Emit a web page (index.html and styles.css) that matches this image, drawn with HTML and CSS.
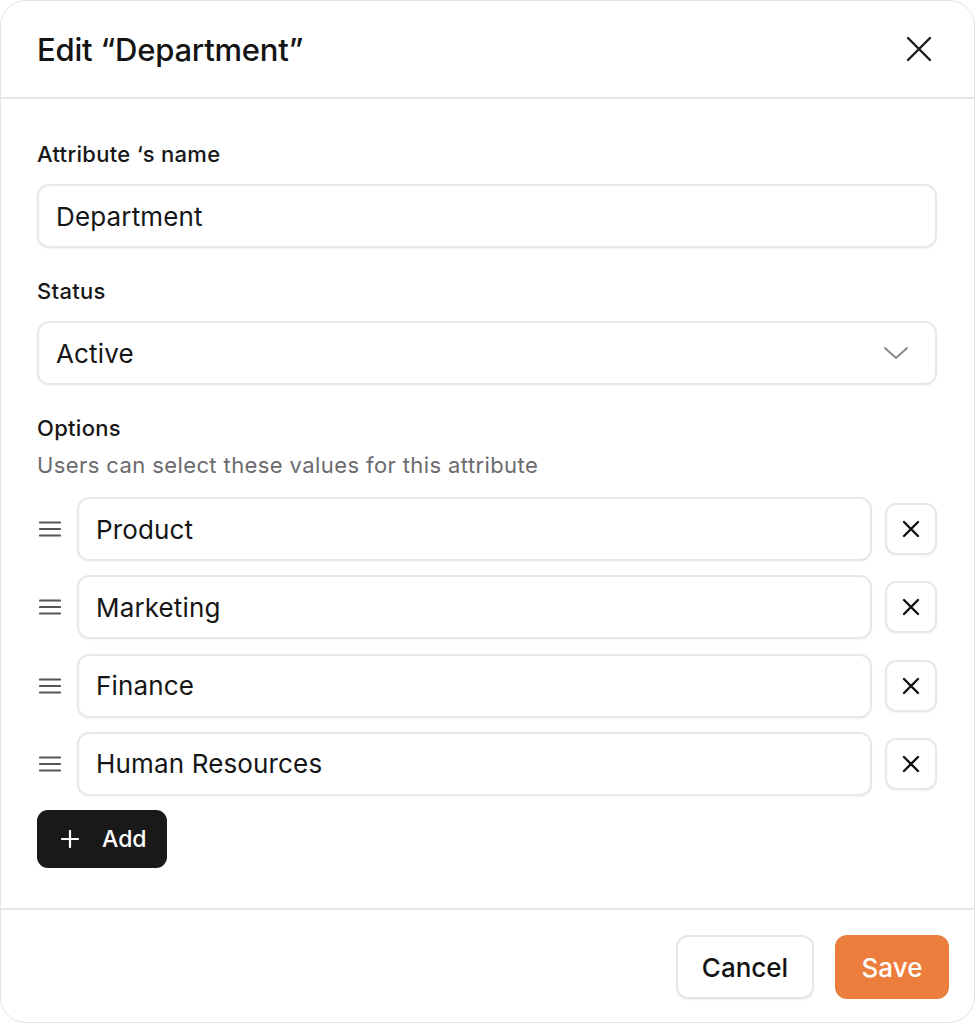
FILE: index.html
```html
<!DOCTYPE html>
<html lang="en">
<head>
<meta charset="utf-8">
<title>Edit Department</title>
<link rel="stylesheet" href="styles.css">
</head>
<body>
<div class="dialog">
  <header class="dialog-header">
    <h1 class="dialog-title">Edit “Department”</h1>
    <button class="icon-btn close-btn" aria-label="Close">
      <svg width="26" height="26" viewBox="0 0 26 26"><path d="M2 2L24 24M24 2L2 24" stroke="#1a1a1a" stroke-width="2.4" stroke-linecap="round" fill="none"/></svg>
    </button>
  </header>
  <main class="dialog-body">
    <label class="field-label">Attribute ‘s name</label>
    <div class="input">Department</div>

    <label class="field-label mt">Status</label>
    <div class="input select">
      <span>Active</span>
      <svg width="26" height="14" viewBox="0 0 26 14"><path d="M2 2L13 12L24 2" stroke="#8a8a8a" stroke-width="2" stroke-linecap="round" stroke-linejoin="round" fill="none"/></svg>
    </div>

    <label class="field-label mt">Options</label>
    <p class="helper">Users can select these values for this attribute</p>

    <div class="options">
      <div class="option-row">
        <span class="handle"><svg width="22" height="16" viewBox="0 0 22 16"><path d="M1 1.5H21M1 8H21M1 14.5H21" stroke="#555" stroke-width="2.2" stroke-linecap="round"/></svg></span>
        <div class="input option-input">Product</div>
        <button class="remove-btn" aria-label="Remove"><svg width="18" height="18" viewBox="0 0 18 18"><path d="M2 2L16 16M16 2L2 16" stroke="#111" stroke-width="2.4" stroke-linecap="round"/></svg></button>
      </div>
      <div class="option-row">
        <span class="handle"><svg width="22" height="16" viewBox="0 0 22 16"><path d="M1 1.5H21M1 8H21M1 14.5H21" stroke="#555" stroke-width="2.2" stroke-linecap="round"/></svg></span>
        <div class="input option-input">Marketing</div>
        <button class="remove-btn" aria-label="Remove"><svg width="18" height="18" viewBox="0 0 18 18"><path d="M2 2L16 16M16 2L2 16" stroke="#111" stroke-width="2.4" stroke-linecap="round"/></svg></button>
      </div>
      <div class="option-row">
        <span class="handle"><svg width="22" height="16" viewBox="0 0 22 16"><path d="M1 1.5H21M1 8H21M1 14.5H21" stroke="#555" stroke-width="2.2" stroke-linecap="round"/></svg></span>
        <div class="input option-input">Finance</div>
        <button class="remove-btn" aria-label="Remove"><svg width="18" height="18" viewBox="0 0 18 18"><path d="M2 2L16 16M16 2L2 16" stroke="#111" stroke-width="2.4" stroke-linecap="round"/></svg></button>
      </div>
      <div class="option-row">
        <span class="handle"><svg width="22" height="16" viewBox="0 0 22 16"><path d="M1 1.5H21M1 8H21M1 14.5H21" stroke="#555" stroke-width="2.2" stroke-linecap="round"/></svg></span>
        <div class="input option-input">Human Resources</div>
        <button class="remove-btn" aria-label="Remove"><svg width="18" height="18" viewBox="0 0 18 18"><path d="M2 2L16 16M16 2L2 16" stroke="#111" stroke-width="2.4" stroke-linecap="round"/></svg></button>
      </div>
    </div>

    <button class="add-btn">
      <svg width="18" height="18" viewBox="0 0 18 18"><path d="M9 1V17M1 9H17" stroke="#fff" stroke-width="2.2" stroke-linecap="round"/></svg>
      <span>Add</span>
    </button>
  </main>
  <footer class="dialog-footer">
    <button class="btn btn-secondary">Cancel</button>
    <button class="btn btn-primary">Save</button>
  </footer>
</div>
</body>
</html>
```

FILE: styles.css
```css
* { box-sizing: border-box; }
html, body { margin: 0; padding: 0; background: #ffffff; }
body {
  font-family: Inter, "Noto Sans", "Liberation Sans", sans-serif;
  color: #161616;
}
.dialog {
  width: 975px;
  height: 1023px;
  border: 1px solid #e3e3e3;
  border-radius: 26px;
  background: #fff;
  display: flex;
  flex-direction: column;
  overflow: hidden;
}
.dialog-header {
  height: 98px;
  flex: none;
  border-bottom: 2px solid #e6e6e6;
  display: flex;
  align-items: center;
  justify-content: space-between;
  padding: 0 42px 0 36px;
}
.dialog-title {
  margin: 0;
  font-size: 31px;
  font-weight: 500;
  letter-spacing: -0.2px;
  color: #141414;
}
.icon-btn {
  border: 0;
  background: none;
  padding: 0;
  display: flex;
  cursor: pointer;
}
.dialog-body {
  flex: 1;
  padding: 41px 37px 0 36px;
  display: flex;
  flex-direction: column;
  align-items: flex-start;
}
.field-label {
  display: block;
  font-size: 22px;
  line-height: 28px;
  font-weight: 500;
  letter-spacing: 0.3px;
  color: #171717;
  margin-bottom: 16px;
}
.field-label.mt { margin-top: 29px; }
.input {
  width: 100%;
  height: 64px;
  border: 2px solid #e8e8e8;
  border-radius: 12px;
  background: #fff;
  box-shadow: 0 1px 2px rgba(0,0,0,0.05);
  display: flex;
  align-items: center;
  padding: 0 17px;
  font-size: 26px;
  letter-spacing: 0.15px;
  color: #161616;
}
.select { justify-content: space-between; padding-right: 26px; }
.helper {
  margin: -7px 0 18px;
  font-size: 22px;
  line-height: 28px;
  letter-spacing: 0.4px;
  color: #6b6b6e;
}
.options {
  width: 100%;
  display: flex;
  flex-direction: column;
  gap: 14.3px;
}
.option-row {
  display: flex;
  align-items: center;
}
.handle {
  width: 40px;
  display: flex;
  align-items: center;
  padding-left: 2px;
}
.option-input { flex: 1; width: auto; }
.remove-btn {
  width: 52px;
  height: 52px;
  margin-left: 13px;
  border: 2px solid #e8e8e8;
  border-radius: 11px;
  background: #fff;
  box-shadow: 0 1px 2px rgba(0,0,0,0.05);
  display: flex;
  align-items: center;
  justify-content: center;
  padding: 0;
}
.add-btn {
  margin-top: 14px;
  height: 58px;
  width: 130px;
  border: 0;
  border-radius: 11px;
  background: #19191a;
  color: #fff;
  font-family: inherit;
  font-size: 23px;
  font-weight: 500;
  display: flex;
  align-items: center;
  gap: 23px;
  padding: 0 0 0 24px;
}
.dialog-footer {
  flex: none;
  height: 114px;
  border-top: 2px solid #e6e6e6;
  display: flex;
  justify-content: flex-end;
  align-items: flex-start;
  gap: 21px;
  padding: 25px 25px 0 0;
}
.btn {
  height: 64px;
  border-radius: 12px;
  font-family: inherit;
  font-size: 26px;
  font-weight: 500;
  padding: 0;
}
.btn-secondary {
  width: 138px;
  background: #fff;
  border: 2px solid #e6e6e6;
  color: #141414;
  box-shadow: 0 1px 2px rgba(0,0,0,0.06);
}
.btn-primary {
  width: 114px;
  background: #ec7e3d;
  border: 0;
  color: #fff;
}
```
